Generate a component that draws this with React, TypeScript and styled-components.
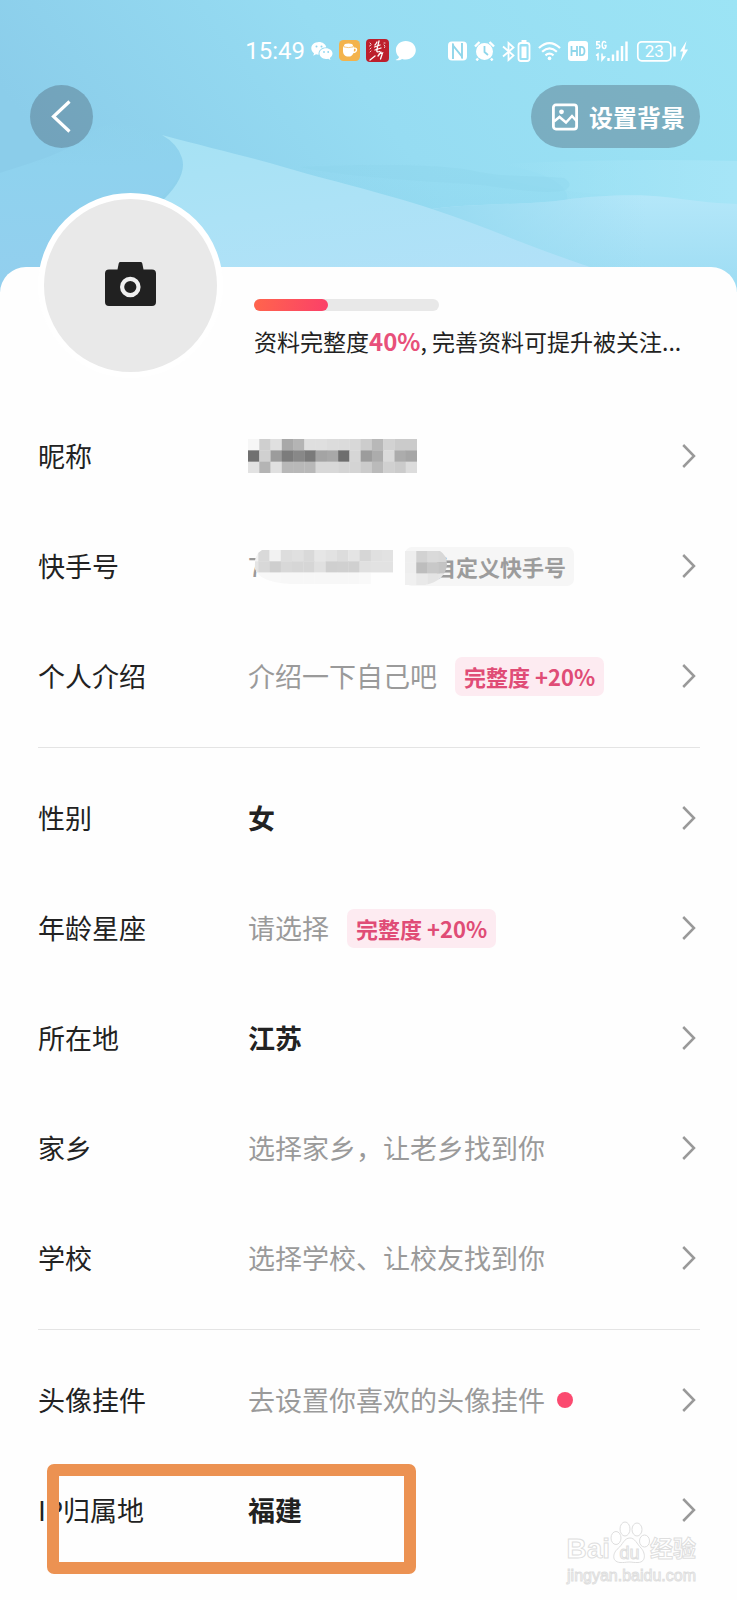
import React from "react";
import styled, { createGlobalStyle } from "styled-components";

const GlobalStyle = createGlobalStyle`
  * { box-sizing: border-box; }
  body { margin: 0; background: #fefefe; }
  body, button { font-family: "Noto Sans CJK SC", "Noto Sans", sans-serif; }
`;

const Page = styled.main`
  position: relative;
  min-height: 100vh;
  padding-bottom: 34px;
  color: #222;
  overflow: hidden;
`;

const Hero = styled.header`
  position: relative;
  height: 292px;
  background: #97dcf2;
`;

const Scenery = styled.svg`
  position: absolute;
  inset: 0;
  width: 100%;
  height: 100%;
`;

const StatusBar = styled.div`
  position: relative;
  display: flex;
  justify-content: flex-end;
  align-items: center;
  gap: 32px;
  height: 85px;
  padding: 16px 48px 0 0;
  color: #fff;
`;

const StatusGroup = styled.div<{ $gap: number }>`
  display: flex;
  align-items: center;
  gap: ${(p) => p.$gap}px;
  svg { display: block; flex: none; }
`;

const Clock = styled.time`
  font: 400 24px/28px Roboto, sans-serif;
`;

const Toolbar = styled.nav`
  position: relative;
  display: flex;
  justify-content: space-between;
  padding: 0 37px 0 30px;
`;

const PillButton = styled.button<{ $round?: boolean }>`
  display: flex;
  align-items: center;
  justify-content: center;
  gap: 11px;
  height: 63px;
  width: ${(p) => (p.$round ? "63px" : "auto")};
  padding: ${(p) => (p.$round ? "0" : "0 15px 0 21px")};
  border: 0;
  border-radius: 32px;
  background: rgba(78, 100, 118, 0.4);
  color: #fff;
  font-size: 24px;
  line-height: 32px;
  font-weight: 700;
  cursor: pointer;
`;

const Card = styled.section`
  position: relative;
  margin-top: -25px;
  border-radius: 26px 26px 0 0;
  background: #fefefe;
`;

const Profile = styled.div`
  display: flex;
  gap: 31px;
  height: 134px;
  padding: 0 38px;
`;

const AvatarButton = styled.button`
  display: flex;
  align-items: center;
  justify-content: center;
  flex: none;
  width: 185px;
  height: 185px;
  margin-top: -74px;
  padding: 0 0 3px;
  border: 6px solid #fff;
  border-radius: 50%;
  background: #e9e9e9;
  cursor: pointer;
`;

const Completion = styled.div`
  flex: 1;
  min-width: 0;
  padding-top: 32px;
`;

const Track = styled.div`
  width: 185px;
  height: 12px;
  border-radius: 6px;
  background: #e8e8e8;
`;

const Fill = styled.div<{ $percent: number }>`
  width: ${(p) => p.$percent}%;
  height: 100%;
  border-radius: 6px;
  background: linear-gradient(100deg, #ff654c, #fb4069);
`;

const CompletionText = styled.p`
  margin: 12px 0 0;
  font-size: 23px;
  line-height: 36px;
  white-space: nowrap;
  strong { color: #e8507a; font-size: 24px; }
`;

const Group = styled.div`
  margin: 0 37px 0 38px;
  & + & {
    margin-top: 16px;
    padding-top: 15px;
    border-top: 1px solid #e4e4e4;
  }
`;

const Row = styled.a`
  position: relative;
  display: flex;
  align-items: center;
  height: 110px;
  padding-right: 4px;
  color: inherit;
  text-decoration: none;
  font-size: 27px;
  line-height: 40px;
`;

const Label = styled.span`
  flex: none;
  width: 210px;
`;

const Value = styled.span<{ $filled?: boolean; $gap?: number }>`
  display: flex;
  flex: 1;
  align-items: center;
  gap: ${(p) => p.$gap ?? 18}px;
  min-width: 0;
  white-space: nowrap;
  color: ${(p) => (p.$filled ? "#222" : "#9a9a9a")};
  font-weight: ${(p) => (p.$filled ? 700 : 400)};
`;

const Tag = styled.span<{ $muted?: boolean }>`
  position: relative;
  height: 39px;
  padding: 0 9px;
  border-radius: 7px;
  background: ${(p) => (p.$muted ? "#f6f6f6" : "#fdebf1")};
  color: ${(p) => (p.$muted ? "#9c9c9c" : "#e04c76")};
  font-size: 22px;
  line-height: 38px;
  font-weight: 700;
`;

const CustomTag = styled(Tag)`
  padding: 0 8px 0 29px;
`;

const HiddenId = styled.span`
  position: relative;
  width: 145px;
`;

const Cover = styled.svg`
  position: absolute;
  top: 4px;
  left: 0;
`;

const Dot = styled.span`
  width: 16px;
  height: 16px;
  border-radius: 50%;
  background: #fb4a70;
`;

const Highlight = styled.span`
  position: absolute;
  top: 9px;
  left: 9px;
  width: 369px;
  height: 110px;
  border: 12px solid #ec9252;
  border-radius: 7px;
  pointer-events: none;
`;

const Watermark = styled.div`
  position: absolute;
  right: 41px;
  bottom: 14px;
  text-align: right;
  color: #fff;
  font-family: "Liberation Sans", "Noto Sans CJK SC", sans-serif;
  -webkit-text-stroke: 1px #dedede;
  pointer-events: none;
`;

const WatermarkBrand = styled.div`
  display: flex;
  align-items: flex-end;
  justify-content: flex-end;
  margin-bottom: 3px;
  font-size: 28px;
  line-height: 28px;
  font-weight: 700;
  small { font-size: 23px; }
`;

const WatermarkSite = styled.div`
  font-size: 16px;
  line-height: 20px;
`;

const Chevron = () => (
  <svg width="14" height="24" viewBox="0 0 14 24" fill="none" stroke="#999" strokeWidth="2.5" aria-hidden="true">
    <path d="M1.2 1 12 12 1.2 23" />
  </svg>
);

/* Grey levels of the cells, two hex digits each. */
const NAME_CELLS = [
  "f6 cf e0 a8 b4 df df dc db d8 cc b8 d2 cb cb",
  "70 d0 9c 7c 88 7a a4 a8 6e d6 9c ac da ac a6",
  "e2 b4 e0 b8 b8 b8 d8 d8 d4 d4 cb ba d0 cb dc",
];
const ID_CELLS = [
  "f2 d9 f2 dd e0 d9 e6 e2 dc e4 d6 e0 e2",
  "e4 d8 ce d8 d6 d6 e0 cf d0 d0 e0 e2 e2",
  "f8 f8 f8 f7 f7 f7 f7 f7 f7 f7 f9 fe fe",
];
const TAG_CELLS = ["ee d2 da d8", "ee bd c8 c4", "f0 e9 e4 e6"];

const Cells = ({ rows, size = 11.25 }: { rows: string[]; size?: number }) => (
  <>
    {rows.flatMap((row, y) =>
      row.split(" ").map((grey, x) => (
        <rect
          key={`${x}-${y}`}
          x={x * size}
          y={y * size}
          width={size + 0.3}
          height={size + 0.3}
          fill={`#${grey}${grey}${grey}`}
        />
      ))
    )}
  </>
);

const Field = ({
  label,
  children,
  filled,
  gap,
  extra,
}: {
  label: string;
  children: React.ReactNode;
  filled?: boolean;
  gap?: number;
  extra?: React.ReactNode;
}) => (
  <Row href="#">
    <Label>{label}</Label>
    <Value $filled={filled} $gap={gap}>{children}</Value>
    <Chevron />
    {extra}
  </Row>
);

const Dunes = () => (
  <Scenery viewBox="0 0 737 292" preserveAspectRatio="none" aria-hidden="true">
    <defs>
      <linearGradient id="sky" x1="0" y1="0.3" x2="1" y2="0">
        <stop offset="0" stopColor="#8bcdea" />
        <stop offset="0.45" stopColor="#96dcf2" />
        <stop offset="1" stopColor="#9ce4f5" />
      </linearGradient>
      <linearGradient id="far" x1="0" y1="0" x2="0" y2="1">
        <stop offset="0" stopColor="#8ed7ed" stopOpacity="0" />
        <stop offset="1" stopColor="#8fd3ef" />
      </linearGradient>
      <linearGradient id="shade" x1="0" y1="0" x2="0" y2="1">
        <stop offset="0" stopColor="#8fd3ed" stopOpacity="0.2" />
        <stop offset="0.25" stopColor="#8fd2ee" />
        <stop offset="1" stopColor="#93cfee" />
      </linearGradient>
      <linearGradient id="ridge" x1="0" y1="0" x2="0.5" y2="1">
        <stop offset="0" stopColor="#a6e2f4" />
        <stop offset="0.5" stopColor="#ace2f6" />
        <stop offset="1" stopColor="#b1e1f8" />
      </linearGradient>
      <linearGradient id="band" x1="0" y1="0" x2="1" y2="0">
        <stop offset="0" stopColor="#a6e5f6" stopOpacity="0" />
        <stop offset="1" stopColor="#a6e5f7" />
      </linearGradient>
      <linearGradient id="near" x1="0" y1="0" x2="0" y2="1">
        <stop offset="0" stopColor="#b4e7f9" />
        <stop offset="1" stopColor="#9cdcf3" />
      </linearGradient>
      <linearGradient id="nearFade" x1="0" y1="0" x2="1" y2="0">
        <stop offset="0" stopColor="#97daf1" />
        <stop offset="0.7" stopColor="#97daf1" stopOpacity="0" />
      </linearGradient>
    </defs>
    <rect width="737" height="292" fill="url(#sky)" />
    <path d="M240 168C330 158 430 160 480 173S540 192 737 205V292H240Z" fill="url(#far)" opacity=".8" />
    <path d="M500 164Q620 158 737 161V215H560Q590 180 500 164Z" fill="url(#band)" />
    <path d="M300 167C380 164 430 164 470 170C500 178 530 175 564 178Q574 184 566 190C540 196 500 186 470 184S350 178 300 167Z" fill="#8dd5eb" opacity=".35" />
    <path d="M432 209C480 203 530 205 564 200S640 194 665 197 710 203 737 204V292H620Z" fill="url(#near)" />
    <path d="M432 209C480 203 530 205 564 200S640 194 665 197 710 203 737 204V292H620Z" fill="url(#nearFade)" />
    <path d="M0 173C30 163 70 152 88 135S125 122 162 135Q184 142 183 162Q180 182 160 198L150 292H0Z" fill="url(#shade)" />
    <path d="M162 135C210 148 250 157 287 168S380 192 432 209 530 247 590 267L640 292H130L158 205Q188 178 182 158Q178 144 162 135Z" fill="url(#ridge)" />
  </Scenery>
);

export default function App() {
  return (
    <Page>
      <GlobalStyle />
      <Hero>
        <Dunes />
        <StatusBar>
          <StatusGroup $gap={6}>
            <Clock>15:49</Clock>
            <svg width="22" height="18" viewBox="0 0 22 18" fill="#fff">
              <path d="M8 0C3.500 0 .3 2.800.3 6.300c0 2 1 3.700 2.700 4.900l-.7 2.500 2.700-1.400c.9.300 1.700.4 2.600.4C7 8.500 10.500 5.300 15.300 5.200 14.500 2.200 11.600 0 8 0Z" />
              <path d="M15 6.200c-3.700 0-6.500 2.400-6.500 5.400s2.800 5.400 6.500 5.400c.8 0 1.500-.1 2.200-.3l2.200 1.200-.6-2c1.700-1 2.700-2.500 2.700-4.300 0-3-2.900-5.400-6.500-5.400Z" />
              <g fill="#8fd6ef">
                <circle cx="5.500" cy="4.500" r="1" /><circle cx="10.500" cy="4.500" r="1" />
                <circle cx="13" cy="10" r=".9" /><circle cx="17.200" cy="10" r=".9" />
              </g>
            </svg>
            <svg width="21" height="21" viewBox="0 0 21 21">
              <rect width="21" height="21" rx="4.500" fill="#f3b34c" />
              <path d="M4 6.500h11v1c2-.5 3.400.6 3.200 2.500-.2 2-1.800 3.200-3.900 3.200-.9 2.200-2.300 3.400-4.800 3.400-3.500 0-5.500-2.300-5.500-5.600Z" fill="#fff" />
              <path d="M15 8.900c1-.4 1.800 0 1.700 1-.1 1-.9 1.500-1.900 1.600Z" fill="#f3b34c" />
              <ellipse cx="9.500" cy="5.600" rx="4.500" ry="2" fill="#fff" />
              <path d="M4.500 6.900Q9.500 8.300 14.500 6.900" fill="none" stroke="#f3b34c" strokeWidth=".7" />
            </svg>
            <svg width="23" height="23" viewBox="0 0 23 23" fill="none" stroke="#fff" strokeLinecap="round">
              <rect width="23" height="23" rx="4" fill="#bd1f2c" stroke="none" />
              <path d="M11 3q-1 2-2 3M13 2l-2 8M8.500 8l5.500-2M9 11l6-2M11.500 10q-2 4 2 2.500M15 13l-3 4M13 15l3.500-1-2 6M9 17l-5 4" strokeWidth="1.300" />
              <path d="M4 4l1 1M3.500 7l1.500-1M5 9l-1 1M5 12l-1 1M18 4h1M18 6l1 1M18.500 8v.5" strokeWidth=".8" />
            </svg>
            <svg width="21" height="20" viewBox="0 0 21 20" fill="#fff">
              <path d="M10.800 0C5.200 0 .9 3.900.9 8.900c0 2.900 1.300 5.300 3.200 7.100-.4 1.200-1.500 2.200-3.600 3 2.400.7 4.800.3 6.600-1 1.200.4 2.400.5 3.700.5 5.600 0 10-4.200 10-9.400S16.400 0 10.800 0Z" />
            </svg>
          </StatusGroup>
          <StatusGroup $gap={7}>
            <svg width="19" height="20" viewBox="0 0 19 20" fill="none">
              <rect width="19" height="19" y=".5" rx="4" fill="#fff" />
              <path d="M5 18V4.500L14 15.500V2M5 4.500V2.500M14 15.500V17.500" stroke="#8fd6ea" strokeWidth="1.900" />
            </svg>
            <svg width="21" height="20" viewBox="0 0 21 20" fill="none">
              <circle cx="10.500" cy="10.500" r="8.500" fill="#fff" />
              <path d="M1 5.500 5.500 1M15.500 1 20 5.500M4 17.500l-1.500 2M17 17.500l1.500 2" stroke="#fff" strokeWidth="2.400" />
              <path d="M10.500 5v6l3.500 3" stroke="#8fd6ea" strokeWidth="1.800" />
            </svg>
            <svg width="29" height="22" viewBox="0 0 29 22" fill="none" stroke="#fff" strokeWidth="1.800">
              <path d="m1 6.500 10.500 9L6.500 20V3l5 4.500L1 16.500" />
              <path d="M19.500 1.200h5" strokeWidth="2.400" />
              <rect x="16.500" y="3" width="11" height="18" rx="2.500" />
              <path d="M19.500 6.500h5v11.500h-5Z" fill="#fff" stroke="none" />
            </svg>
            <svg width="23" height="20" viewBox="0 0 24 20" fill="none" stroke="#fff" strokeWidth="2.300">
              <path d="M1 6.800Q12-3.400 23 6.800M4.300 10.800Q12 3.800 19.700 10.800M7.800 14.500Q12 10.800 16.200 14.500" />
              <circle cx="12" cy="17.700" r="1.900" fill="#fff" stroke="none" />
            </svg>
            <svg width="20" height="20" viewBox="0 0 20 20">
              <rect width="20" height="20" rx="3" fill="#fff" />
              <path d="M3.500 5v10M9 5v10M3.500 10H9M12 5.900v8.200h1.500q3 0 3-4.100t-3-4.100Z" fill="none" stroke="#8fd6ea" strokeWidth="1.800" />
            </svg>
            <svg width="33" height="22" viewBox="0 0 33 22" fill="none" stroke="#fff">
              <path d="M5 1.800H1.800v3Q4.800 4 4.800 6.400T1.200 8M11 2.800Q10 1.500 9 1.600 7.200 1.800 7.200 5T9 8.600q2 .2 2-3H9.300" strokeWidth="1.500" />
              <path d="M1 15.500 3 14v6.500M7 13.500V20l2.500-3H7" strokeWidth="1.500" />
              <path d="M13.500 18v3M18 14.500V21M22.500 10.500V21M27 6V21M31.500 1.500V21" strokeWidth="2.400" />
            </svg>
            <svg width="54" height="22" viewBox="0 0 54 22" fill="none" stroke="#fff">
              <rect x="2.800" y="1.800" width="33" height="19" rx="4" strokeWidth="1.700" />
              <path d="M39.500 6.500v10" strokeWidth="2.400" />
              <path d="M51.500 1 45 11.500h3L45.500 21.500 53 9.500h-3.500Z" fill="#fff" stroke="none" />
              <text x="19.300" y="17.300" textAnchor="middle" fontFamily="Roboto, sans-serif" fontSize="17" fill="#fff" stroke="none">23</text>
            </svg>
          </StatusGroup>
        </StatusBar>
        <Toolbar>
          <PillButton $round aria-label="返回">
            <svg width="21" height="33" viewBox="0 0 21 33" fill="none" stroke="#fff" strokeWidth="3.200">
              <path d="M18.500 1.500 2.500 16.500l16 15" />
            </svg>
          </PillButton>
          <PillButton>
            <svg width="26" height="28" viewBox="0 0 26 28" fill="none" stroke="#fff" strokeWidth="2.800">
              <rect x="1.400" y="1.900" width="23.200" height="24.200" rx="2.500" />
              <path d="m2 18.500 5.500-4.500 6.500 5.500 6-6.500 4.500 5" strokeWidth="2.500" />
              <circle cx="9.500" cy="8.800" r="2.400" fill="#fff" stroke="none" />
            </svg>
            设置背景
          </PillButton>
        </Toolbar>
      </Hero>

      <Card>
        <Profile>
          <AvatarButton aria-label="更换头像">
            <svg width="51" height="44" viewBox="0 0 51 44">
              <path d="M15.500 0h20q1.400 0 1.800 1.400L38.500 7.500H47q4 0 4 4V40q0 4-4 4H4q-4 0-4-4V11.500q0-4 4-4h8.500l1.200-6.100Q14.100 0 15.500 0Z" fill="#212121" />
              <circle cx="25.300" cy="25" r="8.200" fill="none" stroke="#f0f0f0" strokeWidth="4.200" />
            </svg>
          </AvatarButton>
          <Completion>
            <Track role="progressbar" aria-label="资料完整度" aria-valuenow={40} aria-valuemin={0} aria-valuemax={100}>
              <Fill $percent={40} />
            </Track>
            <CompletionText>
              资料完整度<strong>40%</strong>, 完善资料可提升被关注...
            </CompletionText>
          </Completion>
        </Profile>

        <Group>
          <Field label="昵称">
            <svg width="169" height="34" viewBox="0 0 168.750 33.750" preserveAspectRatio="none" aria-hidden="true">
              <Cells rows={NAME_CELLS} />
            </svg>
          </Field>
          <Field label="快手号" gap={12}>
            <HiddenId>
              7
              <Cover width="145" height="34" viewBox="0 0 145 34" aria-hidden="true">
                <clipPath id="idClip">
                  <path d="M14 0H145V23Q132 24 128 34H42Q10 32 7 18Q6 4 14 0Z" />
                </clipPath>
                <g clipPath="url(#idClip)">
                  <rect width="145" height="34" fill="#fefefe" />
                  <g transform="translate(-1 0)"><Cells rows={ID_CELLS} /></g>
                </g>
              </Cover>
            </HiddenId>
            <CustomTag $muted>
              自定义快手号
              <Cover width="42" height="34" viewBox="0 0 42 34" aria-hidden="true">
                <clipPath id="tagClip">
                  <path d="M0 0H35Q42 4 42 14Q40 30 20 34H0Z" />
                </clipPath>
                <g clipPath="url(#tagClip)">
                  <Cells rows={TAG_CELLS} />
                </g>
              </Cover>
            </CustomTag>
          </Field>
          <Field label="个人介绍">
            介绍一下自己吧<Tag>完整度 +20%</Tag>
          </Field>
        </Group>

        <Group>
          <Field label="性别" filled>女</Field>
          <Field label="年龄星座">
            请选择<Tag>完整度 +20%</Tag>
          </Field>
          <Field label="所在地" filled>江苏</Field>
          <Field label="家乡">选择家乡，让老乡找到你</Field>
          <Field label="学校">选择学校、让校友找到你</Field>
        </Group>

        <Group>
          <Field label="头像挂件" gap={12}>
            去设置你喜欢的头像挂件<Dot />
          </Field>
          <Field label="IP归属地" filled extra={<Highlight />}>福建</Field>
        </Group>
      </Card>

      <Watermark>
        <WatermarkBrand>
          Bai
          <svg width="40" height="42" viewBox="0 0 40 42" fill="#fff" stroke="#dedede">
            <ellipse cx="6" cy="17" rx="5" ry="6.500" />
            <ellipse cx="15" cy="8" rx="5" ry="7" />
            <ellipse cx="27" cy="8.500" rx="5" ry="6.500" />
            <ellipse cx="34.500" cy="20" rx="5" ry="6" />
            <path d="M20 17c5 0 7 6 11 10s6 14-3 14.500c-4 .2-6-.5-9-.5s-6 1-9 .5c-9-1-7-10-2-14S14 17 20 17Z" />
            <text x="19.500" y="38" textAnchor="middle" fontFamily="Liberation Sans, sans-serif" fontSize="18" fontWeight="400">du</text>
          </svg>
          <small>经验</small>
        </WatermarkBrand>
        <WatermarkSite>jingyan.baidu.com</WatermarkSite>
      </Watermark>
    </Page>
  );
}
